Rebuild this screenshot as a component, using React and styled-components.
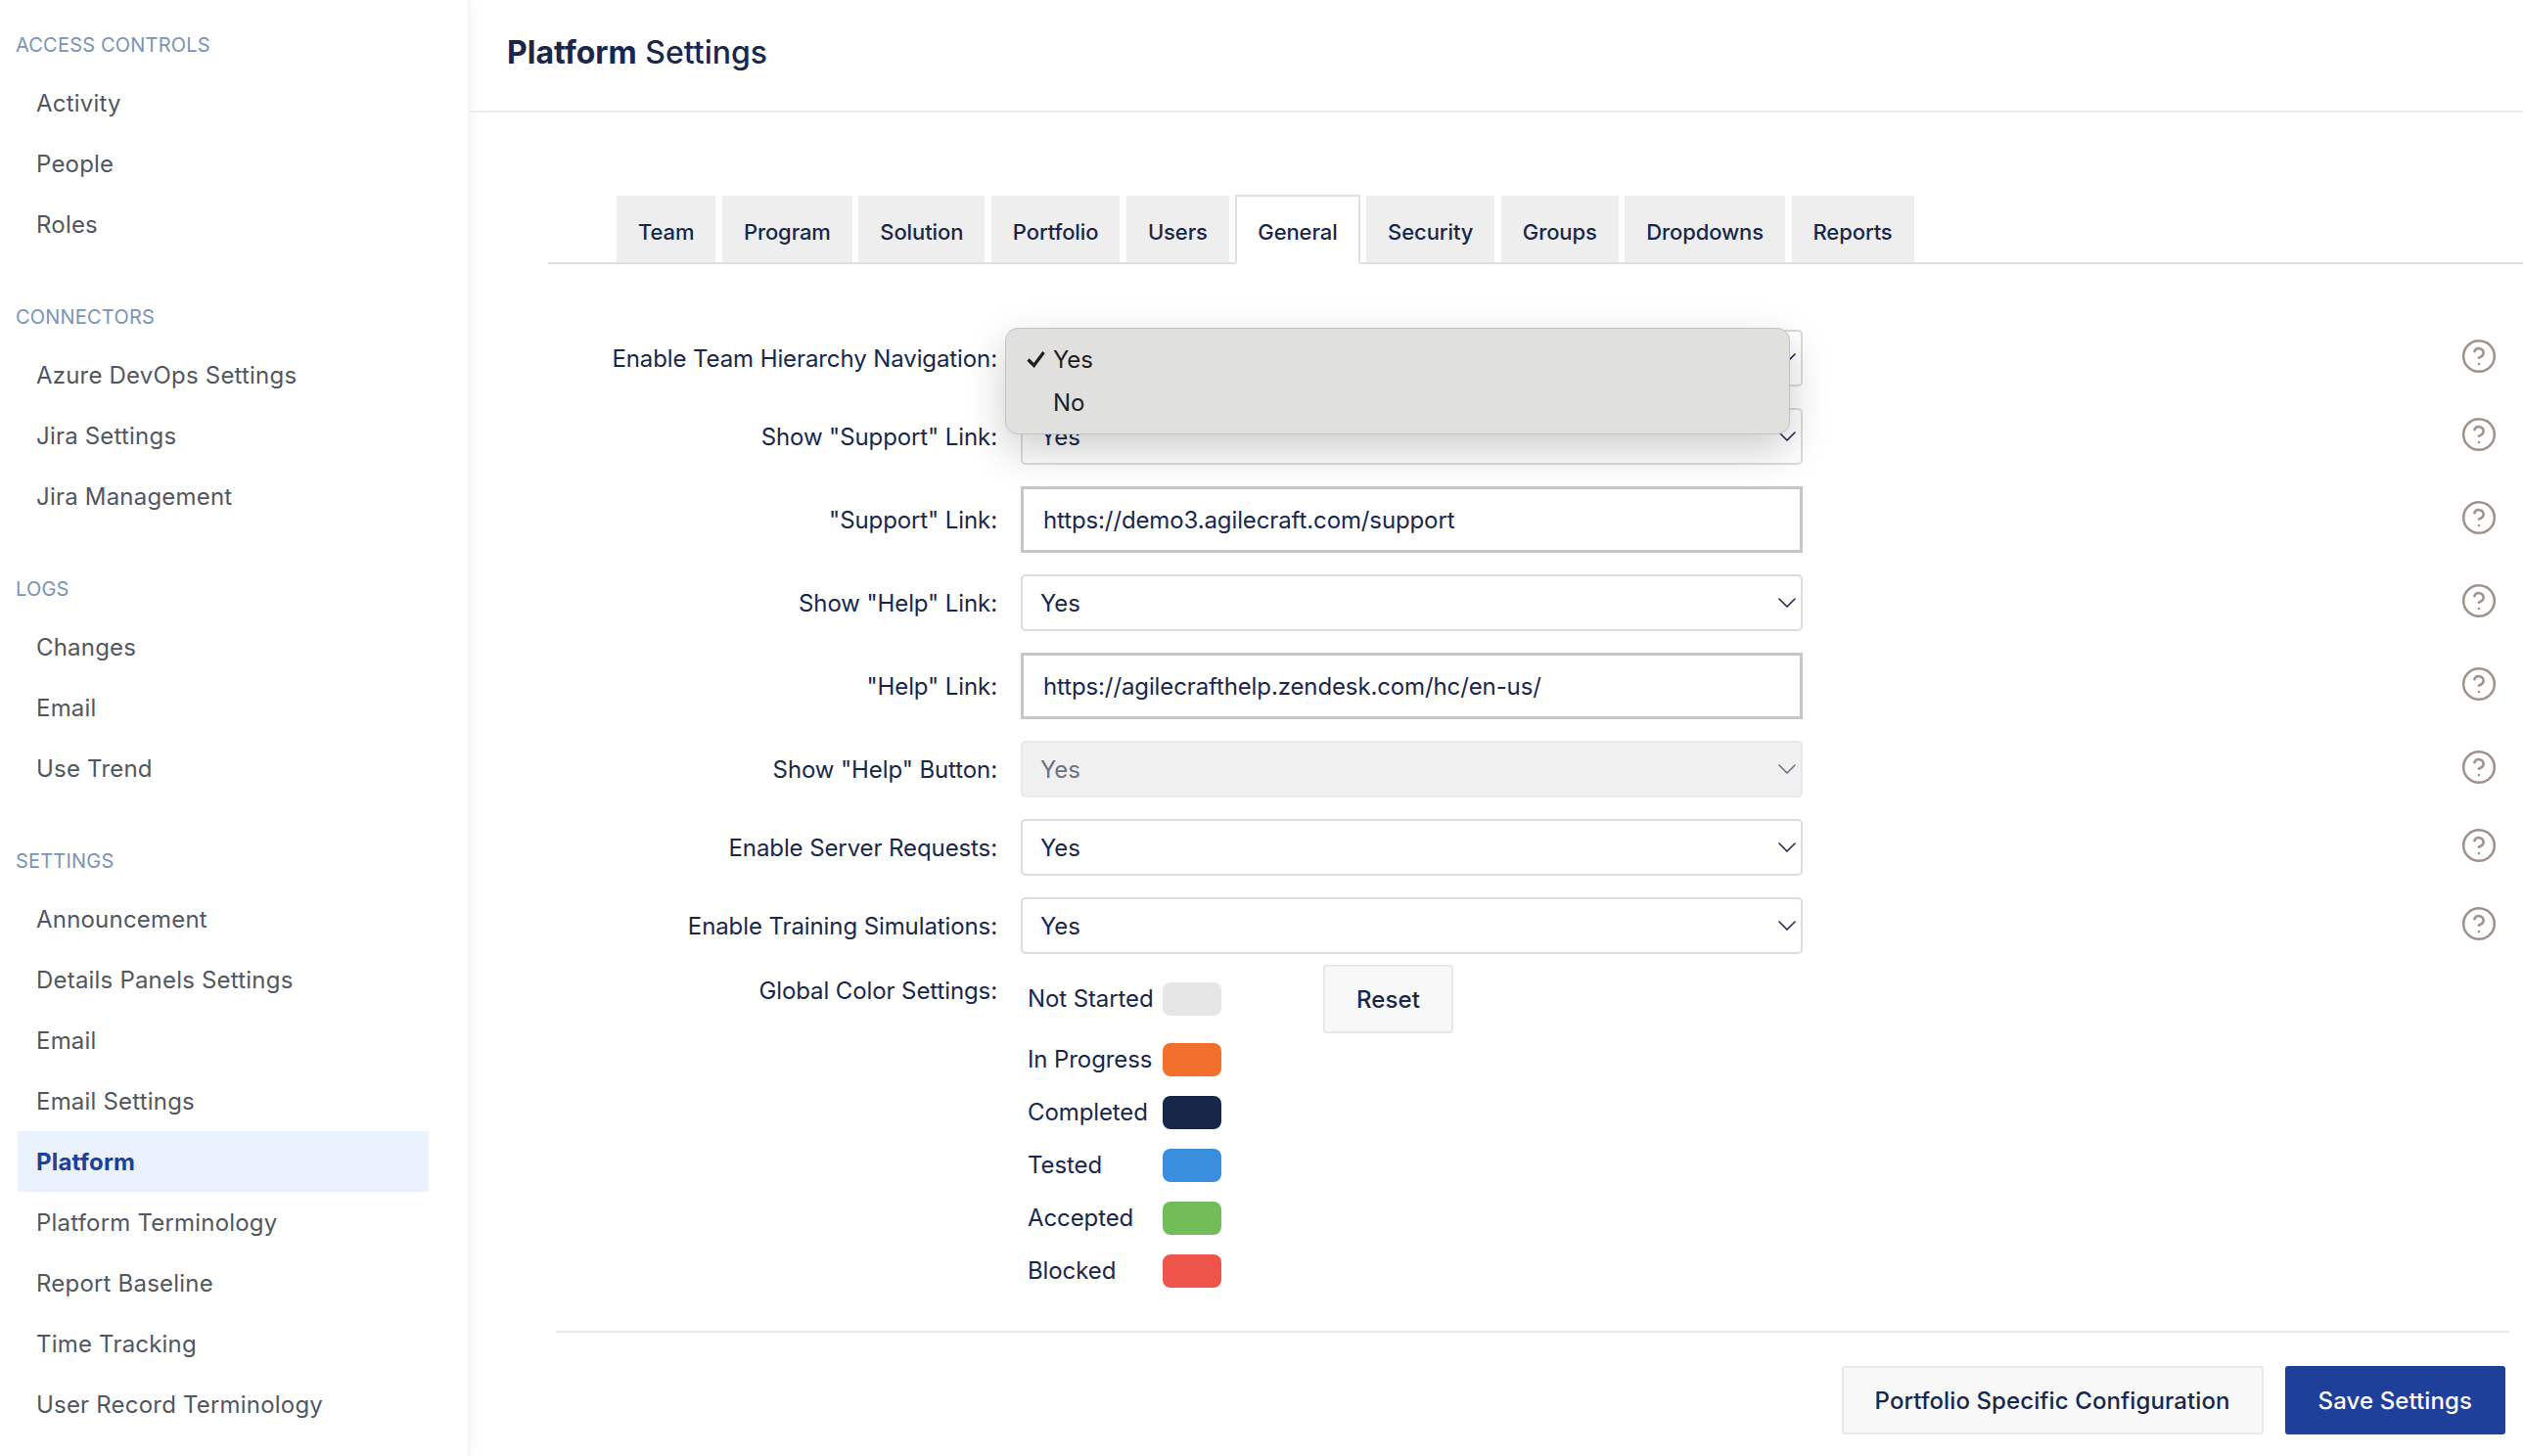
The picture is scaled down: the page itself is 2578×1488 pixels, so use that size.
import React from 'react';
import styled, { createGlobalStyle } from 'styled-components';
import { ChevronDown, CircleHelp } from 'lucide-react';

const GlobalStyle = createGlobalStyle`
  html, body {
    margin: 0;
    padding: 0;
    background: #fff;
  }
  * {
    box-sizing: border-box;
  }
  body {
    font-family: Inter, "Liberation Sans", sans-serif;
  }
`;

const Page = styled.div`
  display: flex;
  width: 2578px;
  height: 1488px;
  overflow: hidden;
  background: #fff;
`;

const Sidebar = styled.nav`
  width: 480px;
  flex: none;
  padding: 18px 40px 0 18px;
  box-shadow: 0 0 14px rgba(0, 0, 0, 0.06);
  border-right: 2px solid #f6f6f6;
`;

const Section = styled.div`
  margin-bottom: 36px;
`;

const SectionTitle = styled.div`
  height: 56px;
  margin-left: -2px;
  display: flex;
  align-items: center;
  font-size: 20px;
  font-weight: 400;
  color: #7a94b5;
  text-transform: uppercase;
  letter-spacing: 0.2px;
`;

const NavItem = styled.div`
  height: 62px;
  display: flex;
  align-items: center;
  padding-left: 19px;
  font-size: 24px;
  font-weight: ${p => (p.$active ? 700 : 400)};
  letter-spacing: 0.2px;
  color: ${p => (p.$active ? '#1e3f9a' : '#52575f')};
  background: ${p => (p.$active ? '#eaf2fe' : 'transparent')};
`;

const Main = styled.main`
  flex: 1;
  min-width: 0;
  display: flex;
  flex-direction: column;
`;

const Header = styled.header`
  height: 115px;
  flex: none;
  display: flex;
  align-items: center;
  padding: 0 0 6px 38px;
  border-bottom: 2px solid #ebebeb;
`;

const Title = styled.h1`
  margin: 0;
  font-size: 32px;
  font-weight: 500;
  color: #19274a;

  strong {
    font-weight: 700;
  }
`;

const Content = styled.div`
  padding: 84px 0 0 80px;
`;

const TabBar = styled.div`
  display: flex;
  align-items: flex-end;
  gap: 6.5px;
  height: 71px;
  padding-left: 70px;
  border-bottom: 2px solid #dfdfdf;
`;

const Tab = styled.div`
  height: ${p => (p.$active ? '71px' : '68px')};
  margin-bottom: ${p => (p.$active ? '-2px' : '0')};
  padding: ${p => (p.$active ? '5px 21px 0' : '5px 22px 0')};
  display: flex;
  align-items: center;
  font-size: 22px;
  font-weight: 500;
  letter-spacing: -0.1px;
  color: #19274a;
  background: ${p => (p.$active ? '#fff' : '#eeeeee')};
  border: ${p => (p.$active ? '2px solid #dfdfdf' : 'none')};
  border-bottom: ${p => (p.$active ? '2px solid #fff' : 'none')};
`;

const Form = styled.div`
  margin-top: 67px;
  padding-right: 26px;
`;

const Row = styled.div`
  display: grid;
  grid-template-columns: 459px 799px 1fr;
  column-gap: 24px;
  align-items: center;
  margin-bottom: 22px;
`;

const Label = styled.label`
  text-align: right;
  font-size: 24px;
  letter-spacing: -0.1px;
  color: #19274a;
`;

const Field = styled.div`
  position: relative;
`;

const SelectBox = styled.div`
  height: 58px;
  display: flex;
  align-items: center;
  justify-content: space-between;
  padding: 0 0 0 18px;
  font-size: 24px;
  letter-spacing: -0.1px;
  color: ${p => (p.$disabled ? '#6b7285' : '#19274a')};
  background: ${p => (p.$disabled ? '#f0f0f0' : '#fff')};
  border: 2px solid ${p => (p.$disabled ? '#e8e8e8' : '#dcdcdc')};
  border-radius: 5px;

  svg {
    margin-right: -2px;
  }
`;

const TextInput = styled.div`
  height: 68px;
  display: flex;
  align-items: center;
  padding: 0 0 0 20px;
  font-size: 24px;
  letter-spacing: -0.12px;
  color: #19274a;
  background: #fff;
  border: 3px solid #c6c6c6;
`;

const HelpIcon = styled(CircleHelp)`
  justify-self: end;
  margin-bottom: 4px;
  color: #a0918b;
`;

const Popup = styled.div`
  position: absolute;
  left: -16px;
  top: -2px;
  width: 802px;
  height: 109px;
  padding: 9px 0 0 21px;
  background: #e0e0de;
  border: 1px solid #c2c2c0;
  border-radius: 13px;
  box-shadow: 0 16px 44px rgba(0, 0, 0, 0.2);
  z-index: 2;
`;

const PopupOption = styled.div`
  height: 44px;
  display: flex;
  align-items: center;
  gap: 8px;
  padding-left: ${p => (p.$selected ? '0' : '27px')};
  font-size: 24px;
  letter-spacing: -0.1px;
  color: #1f1f1f;
`;

const ColorRow = styled.div`
  display: grid;
  grid-template-columns: 459px 1fr;
  column-gap: 31px;
  align-items: start;
  margin-top: -11px;
`;

const ColorLabel = styled(Label)`
  padding-top: 12px;
`;

const ColorArea = styled.div`
  display: flex;
  align-items: flex-start;
`;

const ColorList = styled.div`
  width: 302px;
  padding-top: 18px;
`;

const ColorItem = styled.div`
  display: flex;
  align-items: center;
  height: 34px;
  margin-bottom: ${p => (p.$first ? '28px' : '20px')};
  font-size: 24px;
  letter-spacing: -0.1px;
  color: #19274a;
`;

const ColorName = styled.span`
  width: 138px;
  flex: none;
  padding-bottom: 1px;
`;

const Swatch = styled.span`
  width: 60px;
  height: 34px;
  flex: none;
  border-radius: 8px;
  background: ${p => p.$color};
`;

const Button = styled.button`
  height: 70px;
  padding: 0 32px;
  font-family: inherit;
  font-size: 24px;
  font-weight: 500;
  letter-spacing: 0.1px;
  color: #19274a;
  background: #f8f8f8;
  border: 2px solid #e8e8e8;
  border-radius: 3px;
`;

const PrimaryButton = styled(Button)`
  color: #fff;
  background: #1e3f9a;
  border-color: #1e3f9a;
`;

const Footer = styled.div`
  margin: 24px -12px 0 8px;
  padding: 34px 4px 0 0;
  display: flex;
  justify-content: flex-end;
  gap: 22px;
  border-top: 2px solid #ebebeb;
`;

const sections = [
  { title: 'Access Controls', items: ['Activity', 'People', 'Roles'] },
  { title: 'Connectors', items: ['Azure DevOps Settings', 'Jira Settings', 'Jira Management'] },
  { title: 'Logs', items: ['Changes', 'Email', 'Use Trend'] },
  {
    title: 'Settings',
    items: [
      'Announcement',
      'Details Panels Settings',
      'Email',
      'Email Settings',
      'Platform',
      'Platform Terminology',
      'Report Baseline',
      'Time Tracking',
      'User Record Terminology',
    ],
  },
];

const tabs = ['Team', 'Program', 'Solution', 'Portfolio', 'Users', 'General', 'Security', 'Groups', 'Dropdowns', 'Reports'];

const fields = [
  { label: 'Enable Team Hierarchy Navigation:', value: 'Yes', open: true },
  { label: 'Show "Support" Link:', value: 'Yes' },
  { label: '"Support" Link:', value: 'https://demo3.agilecraft.com/support', input: true },
  { label: 'Show "Help" Link:', value: 'Yes' },
  { label: '"Help" Link:', value: 'https://agilecrafthelp.zendesk.com/hc/en-us/', input: true },
  { label: 'Show "Help" Button:', value: 'Yes', disabled: true },
  { label: 'Enable Server Requests:', value: 'Yes' },
  { label: 'Enable Training Simulations:', value: 'Yes' },
];

const colors = [
  { name: 'Not Started', color: '#e6e6e6' },
  { name: 'In Progress', color: '#f26f2c' },
  { name: 'Completed', color: '#17274a' },
  { name: 'Tested', color: '#3a8ede' },
  { name: 'Accepted', color: '#72bd5a' },
  { name: 'Blocked', color: '#ee544a' },
];

const CheckMark = () => (
  <svg width="19" height="18" viewBox="0 0 19 18" fill="none">
    <path d="M1.5 9.5 L7.5 15.5 L17.5 2" stroke="#1f1f1f" strokeWidth="3.2" />
  </svg>
);

const App = () => (
  <Page>
    <GlobalStyle />
    <Sidebar>
      {sections.map(section => (
        <Section key={section.title}>
          <SectionTitle>{section.title}</SectionTitle>
          {section.items.map(item => (
            <NavItem key={item} $active={item === 'Platform'}>{item}</NavItem>
          ))}
        </Section>
      ))}
    </Sidebar>
    <Main>
      <Header>
        <Title><strong>Platform</strong> Settings</Title>
      </Header>
      <Content>
        <TabBar>
          {tabs.map(tab => (
            <Tab key={tab} $active={tab === 'General'}>{tab}</Tab>
          ))}
        </TabBar>
        <Form>
          {fields.map(field => (
            <Row key={field.label}>
              <Label>{field.label}</Label>
              <Field>
                {field.input ? (
                  <TextInput>{field.value}</TextInput>
                ) : (
                  <SelectBox $disabled={field.disabled}>
                    {field.value}
                    <ChevronDown size={32} strokeWidth={1.2} />
                  </SelectBox>
                )}
                {field.open && (
                  <Popup>
                    <PopupOption $selected>
                      <CheckMark />
                      Yes
                    </PopupOption>
                    <PopupOption>No</PopupOption>
                  </Popup>
                )}
              </Field>
              <HelpIcon size={38} strokeWidth={1.6} />
            </Row>
          ))}
          <ColorRow>
            <ColorLabel>Global Color Settings:</ColorLabel>
            <ColorArea>
              <ColorList>
                {colors.map((c, i) => (
                  <ColorItem key={c.name} $first={i === 0}>
                    <ColorName>{c.name}</ColorName>
                    <Swatch $color={c.color} />
                  </ColorItem>
                ))}
              </ColorList>
              <Button>Reset</Button>
            </ColorArea>
          </ColorRow>
          <Footer>
            <Button>Portfolio Specific Configuration</Button>
            <PrimaryButton>Save Settings</PrimaryButton>
          </Footer>
        </Form>
      </Content>
    </Main>
  </Page>
);

export default App;
